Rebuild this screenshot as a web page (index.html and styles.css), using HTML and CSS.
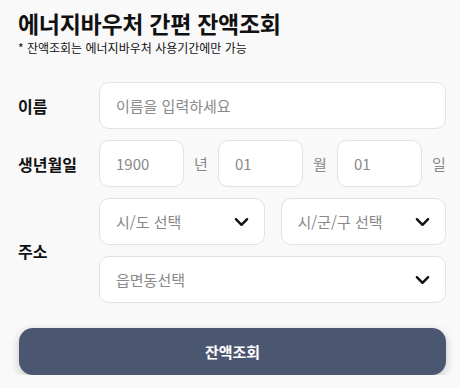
FILE: index.html
```html
<!DOCTYPE html>
<html lang="ko">
  <head>
    <meta charset="UTF-8" />
    <meta name="viewport" content="width=device-width, initial-scale=1.0" />
    <title>에너지바우처 간편 잔액조회</title>
    <link rel="stylesheet" href="styles.css">
  </head>
  <body>
    <div class="page">
      <header class="head">
        <h1>에너지바우처 간편 잔액조회</h1>
        <p class="note">* 잔액조회는 에너지바우처 사용기간에만 가능</p>
      </header>

      <form class="form">
        <div class="row">
          <label class="label" for="name">이름</label>
          <div class="fields">
            <input class="box" id="name" type="text" placeholder="이름을 입력하세요" />
          </div>
        </div>

        <div class="row">
          <span class="label">생년월일</span>
          <div class="fields birth">
            <input class="box" type="text" placeholder="1900" />
            <span class="unit">년</span>
            <input class="box" type="text" placeholder="01" />
            <span class="unit">월</span>
            <input class="box" type="text" placeholder="01" />
            <span class="unit">일</span>
          </div>
        </div>

        <div class="row">
          <span class="label">주소</span>
          <div class="fields address">
            <div class="pair">
              <div class="box select">
                <span>시/도 선택</span>
                <svg class="chev" viewBox="0 0 16 10" width="15" height="10"><path d="M2 2l6 6 6-6" /></svg>
              </div>
              <div class="box select">
                <span>시/군/구 선택</span>
                <svg class="chev" viewBox="0 0 16 10" width="15" height="10"><path d="M2 2l6 6 6-6" /></svg>
              </div>
            </div>
            <div class="box select">
              <span>읍면동선택</span>
              <svg class="chev" viewBox="0 0 16 10" width="15" height="10"><path d="M2 2l6 6 6-6" /></svg>
            </div>
          </div>
        </div>

        <button class="submit" type="button">잔액조회</button>
      </form>
    </div>
  </body>
</html>
```

FILE: styles.css
```css
* {
  margin: 0;
  padding: 0;
  box-sizing: border-box;
}

body {
  background-color: #f9f9f9;
  font-family: "Noto Sans CJK KR", "Noto Sans", sans-serif;
  color: #111;
}

.page {
  padding: 8px 14px 0 18px;
}

h1 {
  font-size: 23px;
  font-weight: 700;
  line-height: 30px;
  letter-spacing: -0.3px;
}

.note {
  font-size: 12px;
  line-height: 14px;
  margin-top: 3px;
}

.form {
  margin-top: 27px;
  display: flex;
  flex-direction: column;
  gap: 11px;
}

.row {
  display: flex;
  align-items: center;
}

.label {
  width: 81px;
  flex-shrink: 0;
  font-size: 16px;
  font-weight: 700;
}

.fields {
  flex: 1;
  display: flex;
  min-width: 0;
}

.box {
  height: 47px;
  background: #fff;
  border: 1px solid #e2e2e2;
  border-radius: 10px;
  padding: 0 16px;
  font-family: inherit;
  font-size: 15px;
  color: #888;
  outline: none;
}

.box::placeholder {
  color: #8a8a8a;
}

.fields > .box {
  width: 100%;
}

.birth {
  align-items: center;
  gap: 10px;
}

.birth .box {
  flex: 1;
  min-width: 0;
}

.unit {
  width: 14px;
  font-size: 15px;
  color: #888;
}

.address {
  flex-direction: column;
  gap: 11px;
}

.pair {
  display: flex;
  gap: 16px;
}

.pair .box {
  flex: 1;
}

.select {
  display: flex;
  align-items: center;
  justify-content: space-between;
  padding-right: 15px;
}

.chev {
  fill: none;
  stroke: #111;
  stroke-width: 2.6;
  stroke-linecap: round;
  stroke-linejoin: round;
}

.submit {
  margin-top: 14px;
  margin-left: 1px;
  height: 47px;
  border: 0;
  border-radius: 14px;
  background: #4b5670;
  color: #fff;
  font-family: inherit;
  font-size: 15px;
  font-weight: 700;
  box-shadow: 0 3px 10px rgba(0, 0, 0, 0.22);
}
```
